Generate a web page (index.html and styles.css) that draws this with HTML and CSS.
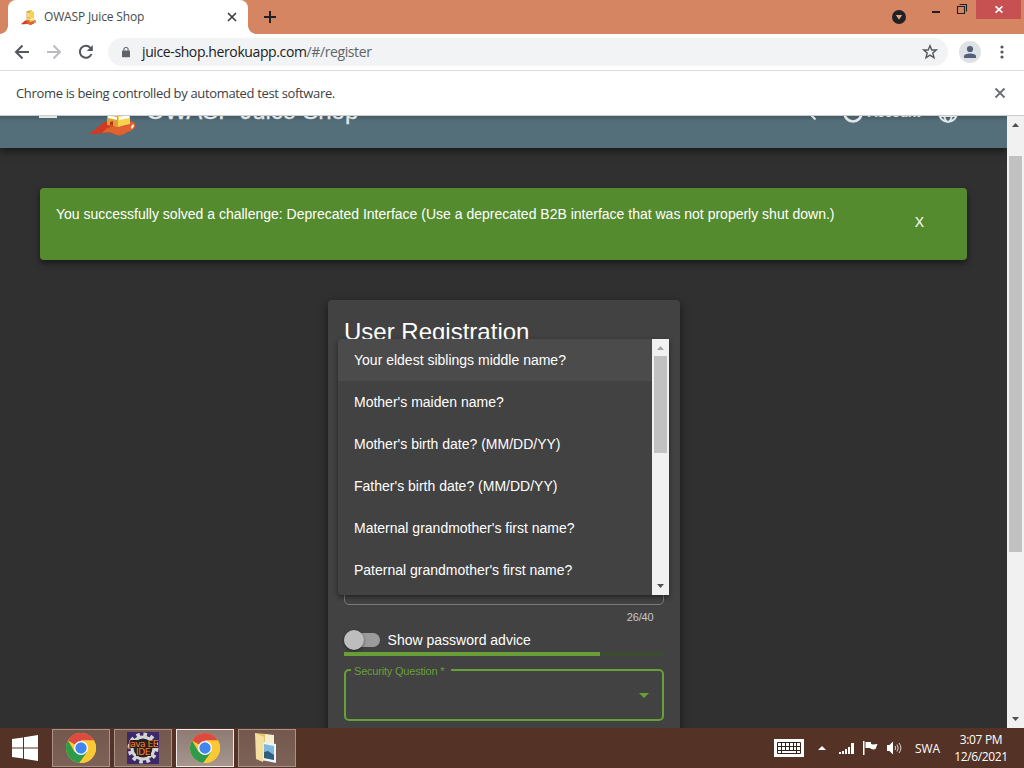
FILE: index.html
```html
<!DOCTYPE html>
<html lang="en">
<head>
<meta charset="utf-8">
<title>OWASP Juice Shop</title>
<link rel="stylesheet" href="styles.css">
</head>
<body>
<svg width="0" height="0" class="defs" aria-hidden="true">
  <defs>
    <symbol id="juice" viewBox="0 0 46 46">
      <path d="M0 43C8 39 11 32 18 31L38 31C44 31 46 34 45 37C44 40 39 41 36 43C31 46 28 46 24 44C17 41 9 44 0 44Z" fill="#d23a20"/>
      <path d="M16 39C24 33 35 40 40 32C44 31 46 34 45 37C44 40 39 41 36 43C31 46 28 46 24 44C21 42 17 42 12 43Z" fill="#e0622f"/>
      <path d="M41 37L43 34L44 36L42 39Z" fill="#fff"/>
      <path d="M17 4L28 2V37L17 35Z" fill="#d9a437"/>
      <path d="M28 2L40 5V34L28 37Z" fill="#f7d24e"/>
      <path d="M19 8L27 9V23L19 22Z" fill="#f4df8d"/>
      <path d="M18 25L27 27V30L18 28Z" fill="#fff8e6"/>
      <path d="M29 27L39 25V28L29 30Z" fill="#fff"/>
      <path d="M20 32L23 31V36L20 35Z" fill="#c4321a"/>
      <path d="M24 3V0H34V4Z" fill="#f0cd58"/>
    </symbol>
    <symbol id="chrome" viewBox="0 0 30 30">
      <circle cx="15" cy="15" r="15" fill="#fcc934"/>
      <path d="M15 15L2 7.5A15 15 0 0 1 28 7.5H15Z" fill="#dc4a40"/>
      <path d="M2 7.5A15 15 0 0 0 13.3 29.9L21.5 18.7L15 15L8.5 18.7Z" fill="#2c9b4a"/>
      <path d="M15 7.5H28A15 15 0 0 1 13.3 29.9L21.5 18.7Z" fill="#fcc934"/>
      <circle cx="15" cy="15" r="7" fill="#fff"/>
      <circle cx="15" cy="15" r="5.7" fill="#4385ee"/>
    </symbol>
  </defs>
</svg>
<div class="screen">
  <header class="titlebar">
    <div class="tab">
      <svg class="favicon" viewBox="0 0 46 46"><use href="#juice"/></svg>
      <span class="tab-title">OWASP Juice Shop</span>
      <svg class="tab-close" viewBox="0 0 10 10"><path d="M1 1L9 9M9 1L1 9"/></svg>
    </div>
    <svg class="new-tab" viewBox="0 0 12 12"><path d="M6 0V12M0 6H12"/></svg>
    <div class="window-controls">
      <svg class="tab-search" viewBox="0 0 14 14"><circle cx="7" cy="7" r="7" fill="#202124"/><path d="M3.8 5H10.2L7 9.8Z" fill="#e5a288"/></svg>
      <svg class="minimize" viewBox="0 0 8 2"><path d="M0 0H8V2H0Z"/></svg>
      <svg class="restore" viewBox="0 0 10 10"><path d="M.5 2.500H7.500V9.500H.5ZM2.500 .5H9.500V7.500"/></svg>
      <div class="window-close"><svg viewBox="0 0 8 7"><path d="M.6 .3L7.400 6.700M7.400 .3L.6 6.700"/></svg></div>
    </div>
  </header>
  <nav class="toolbar">
    <svg class="nav-icon" viewBox="0 0 16 16"><path d="M15 8H2M8.500 1.500L2 8L8.500 14.500"/></svg>
    <svg class="nav-icon disabled" viewBox="0 0 16 16"><path d="M1 8H14M7.500 1.500L14 8L7.500 14.500"/></svg>
    <svg class="nav-icon" viewBox="0 0 16 16"><path d="M13.500 10A6 6 0 1 1 12.400 3.800L13.800 5.300"/><path d="M14.800 1V7H8.800Z" class="solid"/></svg>
    <div class="address">
      <svg class="lock" viewBox="0 0 10 13"><path d="M1 4.500H9Q10 4.500 10 5.500V12Q10 13 9 13H1Q0 13 0 12V5.500Q0 4.500 1 4.500Z" fill="#5f6368"/><path d="M2.300 5V3.300A2.700 2.500 0 0 1 7.700 3.300V5" fill="none" stroke="#5f6368" stroke-width="1.300"/></svg>
      <span class="url">juice-shop.herokuapp.com<span class="path">/#/register</span></span>
      <svg class="star" viewBox="0 0 16 16"><path d="M8 1.800L9.800 6H14.300L10.800 9L12 13.800L8 11.200L4 13.800L5.200 9L1.700 6H6.200Z"/></svg>
    </div>
    <svg class="avatar" viewBox="0 0 22 22"><circle cx="11" cy="11" r="11" fill="#dee1e6"/><circle cx="11" cy="8" r="3.100" fill="#52607a"/><path d="M5 17V15.300C5 11.500 17 11.500 17 15.300V17Z" fill="#52607a"/></svg>
    <svg class="kebab" viewBox="0 0 4 14"><circle cx="2" cy="2" r="1.600"/><circle cx="2" cy="7" r="1.600"/><circle cx="2" cy="12" r="1.600"/></svg>
  </nav>
  <div class="infobar">
    <span>Chrome is being controlled by automated test software.</span>
    <svg viewBox="0 0 10 10"><path d="M.5 .5L9.500 9.500M9.500 .5L.5 9.500"/></svg>
  </div>
  <div class="viewport">
    <main class="page">
      <div class="app-bar">
        <svg class="menu" viewBox="0 0 18 12"><path d="M0 1H18M0 6H18M0 11H18"/></svg>
        <svg class="logo" viewBox="0 0 46 46"><use href="#juice"/></svg>
        <span class="brand">OWASP Juice Shop</span>
        <svg class="search" viewBox="0 0 18 18"><circle cx="6.500" cy="6.500" r="5"/><path d="M10.500 10.500L16.500 16.500"/></svg>
        <svg class="account-icon" viewBox="0 0 20 20"><circle cx="10" cy="10" r="8.500"/><circle cx="10" cy="7" r="2.600"/></svg>
        <span class="account">Account</span>
        <svg class="globe" viewBox="0 0 20 20"><circle cx="10" cy="10" r="8.900"/><ellipse cx="10" cy="10" rx="4" ry="8.900"/><path d="M1.500 7H18.500M1.500 13H18.500"/></svg>
      </div>
      <div class="notice">
        <span>You successfully solved a challenge: Deprecated Interface (Use a deprecated B2B interface that was not properly shut down.)</span>
        <span class="dismiss">X</span>
      </div>
      <section class="card">
        <h1>User Registration</h1>
        <div class="password-field"></div>
        <div class="counter">26/40</div>
        <div class="advice"><span class="switch"></span><span>Show password advice</span></div>
        <div class="strength"><div class="strength-value"></div></div>
        <div class="select"><span class="select-label">Security Question *</span><span class="caret"></span></div>
        <div class="dropdown">
          <ul class="options">
            <li class="active">Your eldest siblings middle name?</li>
            <li>Mother's maiden name?</li>
            <li>Mother's birth date? (MM/DD/YY)</li>
            <li>Father's birth date? (MM/DD/YY)</li>
            <li>Maternal grandmother's first name?</li>
            <li>Paternal grandmother's first name?</li>
          </ul>
          <div class="scrollbar small">
            <svg class="arrow faded" viewBox="0 0 7 4"><path d="M0 4L3.500 0L7 4Z"/></svg>
            <div class="thumb"></div>
            <svg class="arrow down" viewBox="0 0 7 4"><path d="M0 0H7L3.500 4Z"/></svg>
          </div>
        </div>
      </section>
    </main>
    <div class="scrollbar">
      <svg class="arrow" viewBox="0 0 7 4"><path d="M0 4L3.500 0L7 4Z"/></svg>
      <div class="thumb"></div>
      <svg class="arrow down" viewBox="0 0 7 4"><path d="M0 0H7L3.500 4Z"/></svg>
    </div>
  </div>
  <footer class="taskbar">
    <svg class="start" viewBox="0 0 26 26"><path d="M0 4L11 2.400V12.400H0ZM12 2.200L26 0V12.400H12ZM0 13.500H11V23.500L0 22ZM12 13.500H26V26L12 23.700Z" fill="#fff"/></svg>
    <div class="task"><svg class="chrome" viewBox="0 0 30 30"><use href="#chrome"/></svg></div>
    <div class="task java">
      <svg class="gear" viewBox="0 0 32 32"><circle cx="16" cy="16" r="13.500" fill="none" stroke="#d5d5d3" stroke-width="4" stroke-dasharray="3.600 3.470"/><circle cx="16" cy="16" r="11" fill="#28242b" stroke="#d5d5d3" stroke-width="3"/><path d="M2 8H30V16H24V24H9V16H2Z" fill="#28201f"/></svg>
      <div class="java-text"><span>Java EE</span><span class="ide">IDE</span></div>
    </div>
    <div class="task current"><svg class="chrome" viewBox="0 0 30 30"><use href="#chrome"/></svg></div>
    <div class="task"><svg class="folder" viewBox="0 0 26 32"><path d="M1 1L12 2L19 4V27L8 29Z" fill="#e3c56b"/><path d="M11 2L20 3V13L11 11Z" fill="#f3eed0"/><path d="M9 10L22 12V31L8 28Z" fill="#eef6fb"/><path d="M10 12L20 14V28L10 26Z" fill="#7eb9dc"/><path d="M10 20L14 19L20 23V28L10 26Z" fill="#315f7e"/><path d="M1 1L10 5L9 30L2 27Z" fill="#f5dfa0"/></svg></div>
    <div class="tray">
      <svg class="keyboard" viewBox="0 0 30 18"><path d="M0 0H30V18H0Z" fill="#fff"/><path d="M3.500 3.500H26.500V14.500H3.500ZM3.500 7.500H26.500M3.500 11.500H26.500M7.500 3.500V14.500M11.500 3.500V11M15.500 3.500V11M19.500 3.500V11M22.500 3.500V14.500" fill="none" stroke="#332019"/></svg>
      <svg class="up" viewBox="0 0 8 4"><path d="M0 4L4 0L8 4Z" fill="#fff"/></svg>
      <svg class="signal" viewBox="0 0 15 11"><path d="M0 9H2V11H0ZM3 8H5V11H3ZM6 6H8V11H6ZM9 4H11V11H9ZM12 0H15V11H12Z" fill="#fff"/></svg>
      <svg class="flag" viewBox="0 0 15 14"><path d="M0 0H1.500V14H0ZM2.500 1H8V3C10 4 12 3 14.500 3L12.500 8C10 9 8 8 7 7H2.500Z" fill="#fff"/></svg>
      <svg class="volume" viewBox="0 0 15 14"><path d="M0 4H2.500L6 .5V13.500L2.500 10H0Z" fill="#fff"/><path d="M8 5Q9.500 7 8 9M10 3.500Q12.500 7 10 10.500M12 2Q15.800 7 12 12" fill="none" stroke="#fff" stroke-width=".8"/></svg>
      <span class="lang">SWA</span>
      <div class="clock"><span class="time">3:07 PM</span><span class="date">12/6/2021</span></div>
    </div>
  </footer>
</div>
</body>
</html>
```
FILE: styles.css
```css
* { box-sizing: border-box; }
body { margin: 0; font-family: "Liberation Sans", Arial, sans-serif; }
svg { display: block; flex: none; overflow: visible; }
.defs { position: absolute; }
.screen { width: 1024px; height: 768px; display: flex; flex-direction: column; overflow: hidden; background: #303030; }

.titlebar { height: 34px; flex: none; display: flex; align-items: flex-start; background: #d68562; }
.tab { position: relative; width: 240px; height: 34px; margin-left: 8px; padding: 0 11px 0 13px; display: flex; align-items: center; background: #fff; border-radius: 8px 8px 0 0; }
.tab::before, .tab::after { content: ""; position: absolute; bottom: 0; width: 8px; height: 8px; }
.tab::before { left: -8px; background: radial-gradient(circle at 0 0, transparent 7.5px, #fff 8px); }
.tab::after { right: -8px; background: radial-gradient(circle at 100% 0, transparent 7.5px, #fff 8px); }
.favicon { width: 15px; height: 15px; }
.tab-title { margin-left: 8px; font: 12px/16px "Open Sans", sans-serif; letter-spacing: -.15px; color: #45494d; white-space: nowrap; }
.tab-close { width: 10px; height: 10px; margin-left: auto; fill: none; stroke: #3c4043; stroke-width: 1.7; }
.new-tab { width: 12px; height: 12px; margin: 11px 0 0 16px; stroke: #202124; stroke-width: 2; }
.window-controls { display: flex; margin-left: auto; padding-right: 3px; }
.tab-search { width: 14px; height: 14px; margin: 10px 26px 0 0; }
.minimize { width: 8px; height: 2px; margin: 11px 17px 0 0; fill: #202124; }
.restore { width: 10px; height: 10px; margin: 4px 9px 0 0; fill: none; stroke: #202124; stroke-width: 1.1; }
.window-close { width: 45px; height: 19px; display: grid; place-items: center; background: #c75050; }
.window-close svg { width: 8px; height: 7px; fill: none; stroke: #fff; stroke-width: 1.6; }

.toolbar { height: 37px; flex: none; display: flex; align-items: center; padding: 0 20px 0 14px; background: #fff; border-bottom: 1px solid #dadce0; }
.nav-icon { width: 16px; height: 16px; margin-right: 16px; fill: none; stroke: #54585c; stroke-width: 2; }
.nav-icon.disabled { stroke: #bbbcbf; }
.nav-icon .solid { fill: #54585c; stroke: none; }
.address { width: 840px; height: 28px; margin-left: -2px; padding: 0 10px 0 14px; display: flex; align-items: center; background: #f1f3f4; border-radius: 14px; }
.lock { width: 8px; height: 12px; margin-top: -1px; }
.url { margin-left: 12px; font: 14px/20px "Open Sans", sans-serif; letter-spacing: -.39px; color: #202124; }
.path { color: #5f6368; }
.star { width: 16px; height: 16px; margin-left: auto; fill: none; stroke: #54585c; stroke-width: 1.4; }
.avatar { width: 22px; height: 22px; margin-left: 11px; }
.kebab { width: 4px; height: 14px; margin-left: auto; fill: #54585c; }
.infobar { height: 45px; flex: none; display: flex; align-items: center; justify-content: space-between; padding: 0 19px 0 16px; background: #fff; border-bottom: 1px solid #c9cbcc; font: 13px/20px "Open Sans", sans-serif; letter-spacing: -.34px; color: #3c4043; }
.infobar svg { width: 10px; height: 10px; fill: none; stroke: #6b6f73; stroke-width: 1.8; }

.viewport { height: 612px; flex: none; display: flex; overflow: hidden; background: #303030; }
.page { width: 1007px; height: 612px; overflow: hidden; font-size: 14px; color: #fff; }
.app-bar { height: 64px; margin-top: -32px; display: flex; align-items: center; padding: 0 49px 0 39px; background: linear-gradient(#455a64 32px, #546e7a 37px); box-shadow: 0 3px 8px rgba(0,0,0,.55); color: #e3e7e9; }
.menu { width: 18px; height: 12px; margin-top: -8px; fill: none; stroke: #e3e7e9; stroke-width: 2; }
.logo { width: 46px; height: 46px; margin: -6px 0 0 33px; }
.brand { margin: -10px 0 0 10px; font-size: 24px; line-height: 30px; letter-spacing: -.08px; -webkit-text-stroke: .3px #e3e7e9; }
.search { width: 18px; height: 18px; margin: -8px 0 0 auto; fill: none; stroke: #e3e7e9; stroke-width: 2; }
.account-icon, .globe { width: 20px; height: 20px; margin-top: -7px; fill: none; stroke: #e3e7e9; stroke-width: 2.6; }
.account-icon { margin-left: 26px; }
.account { margin: -9px 0 0 5px; font-size: 14px; font-weight: 700; letter-spacing: -.5px; }
.globe { margin-left: 18px; stroke-width: 1.9; }
.notice { width: 927px; height: 72px; margin: 40px 0 0 40px; padding: 16px 43px 0 16px; display: flex; justify-content: space-between; align-items: flex-start; background: #558b2f; border-radius: 4px; box-shadow: 0 3px 6px rgba(0,0,0,.5); line-height: 20px; white-space: nowrap; }
.dismiss { margin-top: 8px; }
.card { position: relative; width: 352px; height: 460px; margin: 40px 0 0 328px; padding: 16px; background: #424242; border-radius: 4px; box-shadow: 0 3px 8px rgba(0,0,0,.5); }
h1 { margin: 0; font-size: 24px; line-height: 32px; font-weight: 400; }
.password-field { height: 50px; margin-top: 207px; border: 1px solid #7b7b7b; border-radius: 5px; }
.counter { margin-top: 6px; padding-right: 10.5px; text-align: right; font-size: 11px; line-height: 12px; letter-spacing: -.15px; color: #c6c6c6; }
.advice { height: 20px; margin-top: 7px; display: flex; align-items: center; gap: 7.6px; }
.switch { position: relative; width: 36px; height: 14px; background: #9b9b9b; border-radius: 7px; }
.switch::before { content: ""; position: absolute; left: 0; top: -3px; width: 20px; height: 20px; border-radius: 50%; background: #bdbdbd; box-shadow: 0 1px 3px rgba(0,0,0,.5); }
.strength { height: 4px; margin-top: 2px; background: #3c4c30; }
.strength-value { width: 80%; height: 4px; background: #689f38; }
.select { position: relative; height: 52px; margin-top: 13px; padding-right: 13px; display: flex; align-items: center; justify-content: flex-end; border: 2px solid #689f38; border-radius: 5px; }
.select-label { position: absolute; left: 5px; top: -6px; width: 100px; padding-left: 3px; font-size: 11px; line-height: 12px; letter-spacing: -.2px; background: #424242; color: #689f38; white-space: nowrap; }
.caret { border: 5px solid transparent; border-top-color: #689f38; border-bottom: 0; }
.dropdown { position: absolute; left: 10px; top: 39px; width: 331px; height: 256px; display: flex; overflow: hidden; background: #424242; border-radius: 4px 0 0 4px; box-shadow: 0 2px 5px rgba(0,0,0,.5); }
.options { flex: 1; margin: 0; padding: 0; list-style: none; }
.options li { height: 42px; padding-left: 16px; line-height: 42px; white-space: nowrap; }
.options .active { background: #4b4b4b; }
.scrollbar { width: 17px; height: 612px; flex: none; display: flex; flex-direction: column; align-items: center; padding: 7px 0; background: #f1f1f1; }
.arrow { width: 7px; height: 4px; fill: #505050; }
.arrow.faded { fill: #a3a3a3; }
.arrow.down { margin-top: auto; }
.thumb { width: 13px; height: 396px; flex: none; margin-top: 29px; background: #c1c1c1; }
.small { height: 256px; }
.small .thumb { height: 97px; margin-top: 6px; }

.taskbar { height: 40px; flex: none; display: flex; align-items: center; padding-left: 12px; background: #553226; color: #fff; }
.start { width: 26px; height: 26px; margin-right: 14px; }
.task { width: 58px; height: 38px; margin-right: 4px; display: grid; place-items: center; background: linear-gradient(#74584e, #7d6258); border: 1px solid #a79389; }
.task.current { background: linear-gradient(#8d7b74, #a6968e); border-color: #f0ebe8; }
.chrome { width: 30px; height: 30px; }
.java { position: relative; }
.gear { width: 32px; height: 32px; background: #3d2868; }
.java-text { position: absolute; left: 8px; right: 8px; top: 10px; display: flex; flex-direction: column; align-items: center; font: 9px/8px "DejaVu Sans", sans-serif; letter-spacing: -.5px; color: #f58029; white-space: nowrap; }
.folder { width: 26px; height: 32px; }
.tray { margin-left: auto; display: flex; align-items: center; padding-right: 17px; font: 12px/17px "Open Sans", sans-serif; letter-spacing: -.35px; }
.keyboard { width: 30px; height: 18px; margin-right: 14px; }
.up { width: 8px; height: 4px; margin-right: 13px; }
.signal { width: 15px; height: 11px; margin-right: 9px; }
.flag { width: 15px; height: 14px; margin-right: 9px; }
.volume { width: 15px; height: 14px; margin-right: 13px; }
.lang { width: 27px; letter-spacing: -.1px; }
.clock { width: 52px; margin-left: 13px; display: flex; flex-direction: column; align-items: center; white-space: nowrap; }
```
